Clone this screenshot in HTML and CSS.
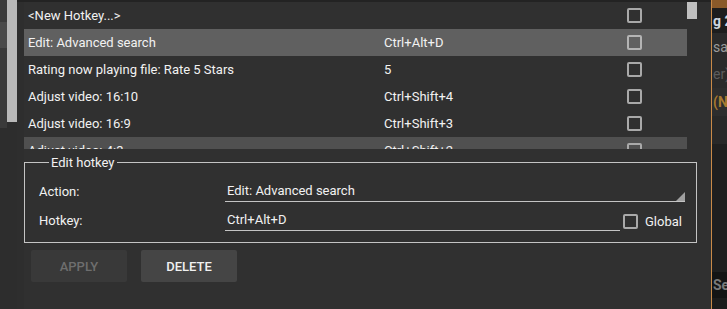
FILE: index.html
```html
<!DOCTYPE html>
<html>
<head>
<meta charset="utf-8">
<link rel="stylesheet" href="styles.css">
</head>
<body>
<div class="screen">
  <div class="leftstrip">
    <div class="bands">
      <div class="band b1"></div>
      <div class="band b2"></div>
      <div class="band b3"></div>
      <div class="band b4"></div>
    </div>
    <div class="lscroll"><div class="lthumb"></div></div>
    <div class="lgap"></div>
  </div>
  <div class="panel">
    <div class="topline"></div>
    <div class="listwrap">
      <div class="list">
        <div class="row"><span class="c-act">&lt;New Hotkey...&gt;</span><span class="c-key"></span><span class="cb"></span></div>
        <div class="row sel"><span class="c-act">Edit: Advanced search</span><span class="c-key">Ctrl+Alt+D</span><span class="cb"></span></div>
        <div class="row"><span class="c-act">Rating now playing file: Rate 5 Stars</span><span class="c-key">5</span><span class="cb"></span></div>
        <div class="row"><span class="c-act">Adjust video: 16:10</span><span class="c-key">Ctrl+Shift+4</span><span class="cb"></span></div>
        <div class="row"><span class="c-act">Adjust video: 16:9</span><span class="c-key">Ctrl+Shift+3</span><span class="cb"></span></div>
        <div class="row hov"><span class="c-act">Adjust video: 4:3</span><span class="c-key">Ctrl+Shift+2</span><span class="cb"></span></div>
      </div>
      <div class="rscroll"><div class="rthumb"></div></div>
    </div>
    <fieldset class="edit">
      <legend>Edit hotkey</legend>
      <div class="form">
        <label class="lbl">Action:</label>
        <div class="select">Edit: Advanced search<span class="tri"></span></div>
        <label class="lbl">Hotkey:</label>
        <div class="keyline">
          <div class="input">Ctrl+Alt+D</div>
          <span class="cb gcb"></span>
          <span class="glabel">Global</span>
        </div>
      </div>
    </fieldset>
    <div class="buttons">
      <button class="btn disabled">APPLY</button>
      <button class="btn">DELETE</button>
    </div>
  </div>
  <div class="orange"></div>
  <div class="behind">
    <div class="bh r0"></div>
    <div class="bh r1">g 2</div>
    <div class="bh r2">sa</div>
    <div class="bh r3">er).</div>
    <div class="bh r4">(N</div>
    <div class="bh r5"></div>
    <div class="bh r6"></div>
    <div class="bh r7">Sel</div>
    <div class="bh r8"></div>
  </div>
</div>
</body>
</html>
```

FILE: styles.css
```css
* { box-sizing: border-box; }
html, body { margin: 0; padding: 0; }
body {
  width: 727px;
  height: 309px;
  overflow: hidden;
  background: #303030;
  font-family: Roboto, "Liberation Sans", sans-serif;
  font-size: 13px;
  color: #f2f2f2;
}
.screen { display: flex; height: 309px; }

/* left strip (background window + scrollbar) */
.leftstrip { width: 24px; display: flex; flex-shrink: 0; }
.bands { width: 7px; display: flex; flex-direction: column; }
.band.b1 { height: 22px; background: #3b3b3b; }
.band.b2 { height: 26px; background: #4a4a4a; }
.band.b3 { height: 80px; background: #3a3a3a; }
.band.b4 { flex: 1; background: #2d2d2d; }
.lscroll { width: 10px; background: #2d2d2d; }
.lthumb { height: 122px; background: #b9b9b9; }
.lgap { width: 7px; background: #2e2e2e; }

/* main panel */
.panel {
  width: 687px;
  flex-shrink: 0;
  background: #303030;
  display: flex;
  flex-direction: column;
}
.topline { height: 2px; background: #232323; margin-left: -7px; }
.listwrap { display: flex; height: 147px; overflow: hidden; }
.list { width: 663px; }
.row {
  height: 27px;
  display: flex;
  align-items: center;
  padding-left: 4px;
  white-space: nowrap;
}
.row.sel { background: #606060; }
.row.hov { background: #505050; }
.c-act { width: 356px; }
.c-key { width: 243px; }
.cb {
  width: 15px;
  height: 15px;
  border: 2px solid #a9a9a9;
  border-radius: 2px;
  display: inline-block;
}
.row.sel .cb { border-color: #b4b4b4; }
.rscroll { width: 10px; }
.rthumb { height: 17px; background: #c0c0c0; }

/* edit fieldset */
.edit {
  margin: 6px 14px 0 0;
  border: 1px solid #c4c4c4;
  padding: 12px 11px 7px 14px;
  height: 88px;
}
.edit legend {
  padding: 0 2px;
  margin-left: 10px;
  color: #f2f2f2;
  line-height: 15px;
}
.form {
  display: grid;
  grid-template-columns: 186px 1fr;
  row-gap: 9px;
  align-items: center;
}
.lbl { line-height: 20px; }
.select {
  position: relative;
  height: 20px;
  line-height: 18px;
  border-bottom: 1px solid #c4c4c4;
  padding-left: 2px;
}
.tri {
  position: absolute;
  right: 0;
  bottom: 0;
  width: 0;
  height: 0;
  border-style: solid;
  border-width: 0 0 9px 9px;
  border-color: transparent transparent #a0a0a0 transparent;
}
.keyline { display: flex; align-items: center; }
.input {
  width: 395px;
  height: 20px;
  line-height: 18px;
  border-bottom: 1px solid #c4c4c4;
  padding-left: 2px;
}
.gcb { margin-left: 3px; }
.glabel { margin-left: 7px; }

/* buttons */
.buttons { display: flex; gap: 14px; padding: 7px 0 0 7px; }
.btn {
  width: 96px;
  height: 32px;
  border: none;
  border-radius: 2px;
  background: #454545;
  color: #f0f0f0;
  font-family: Roboto, "Liberation Sans", sans-serif;
  font-weight: 500;
  font-size: 13px;
  padding: 0;
}
.btn.disabled { background: #393939; color: #6e6e6e; }

/* right background window */
.orange { width: 1px; background: #c98a48; flex-shrink: 0; }
.behind {
  flex: 1;
  display: flex;
  flex-direction: column;
  overflow: hidden;
  white-space: nowrap;
  font-weight: 700;
  font-size: 14px;
}
.bh { padding-left: 1px; display: flex; align-items: center; }
.r0 { height: 8px; background: #8a5a2a; }
.r1 { height: 25px; background: #1d1d1d; color: #cfd6de; }
.r2 { height: 27px; background: #2a2a2a; color: #9a9a9a; font-weight: 400; }
.r3 { height: 28px; background: #2a2a2a; color: #5c5c5c; font-weight: 400; }
.r4 { height: 28px; background: #2d2d2d; color: #a87a30; }
.r5 { height: 28px; background: #282828; }
.r6 { height: 128px; background: #1f1f1f; }
.r7 { height: 26px; background: #141414; color: #7a7a7a; }
.r8 { flex: 1; background: #1c1c1c; }
```
